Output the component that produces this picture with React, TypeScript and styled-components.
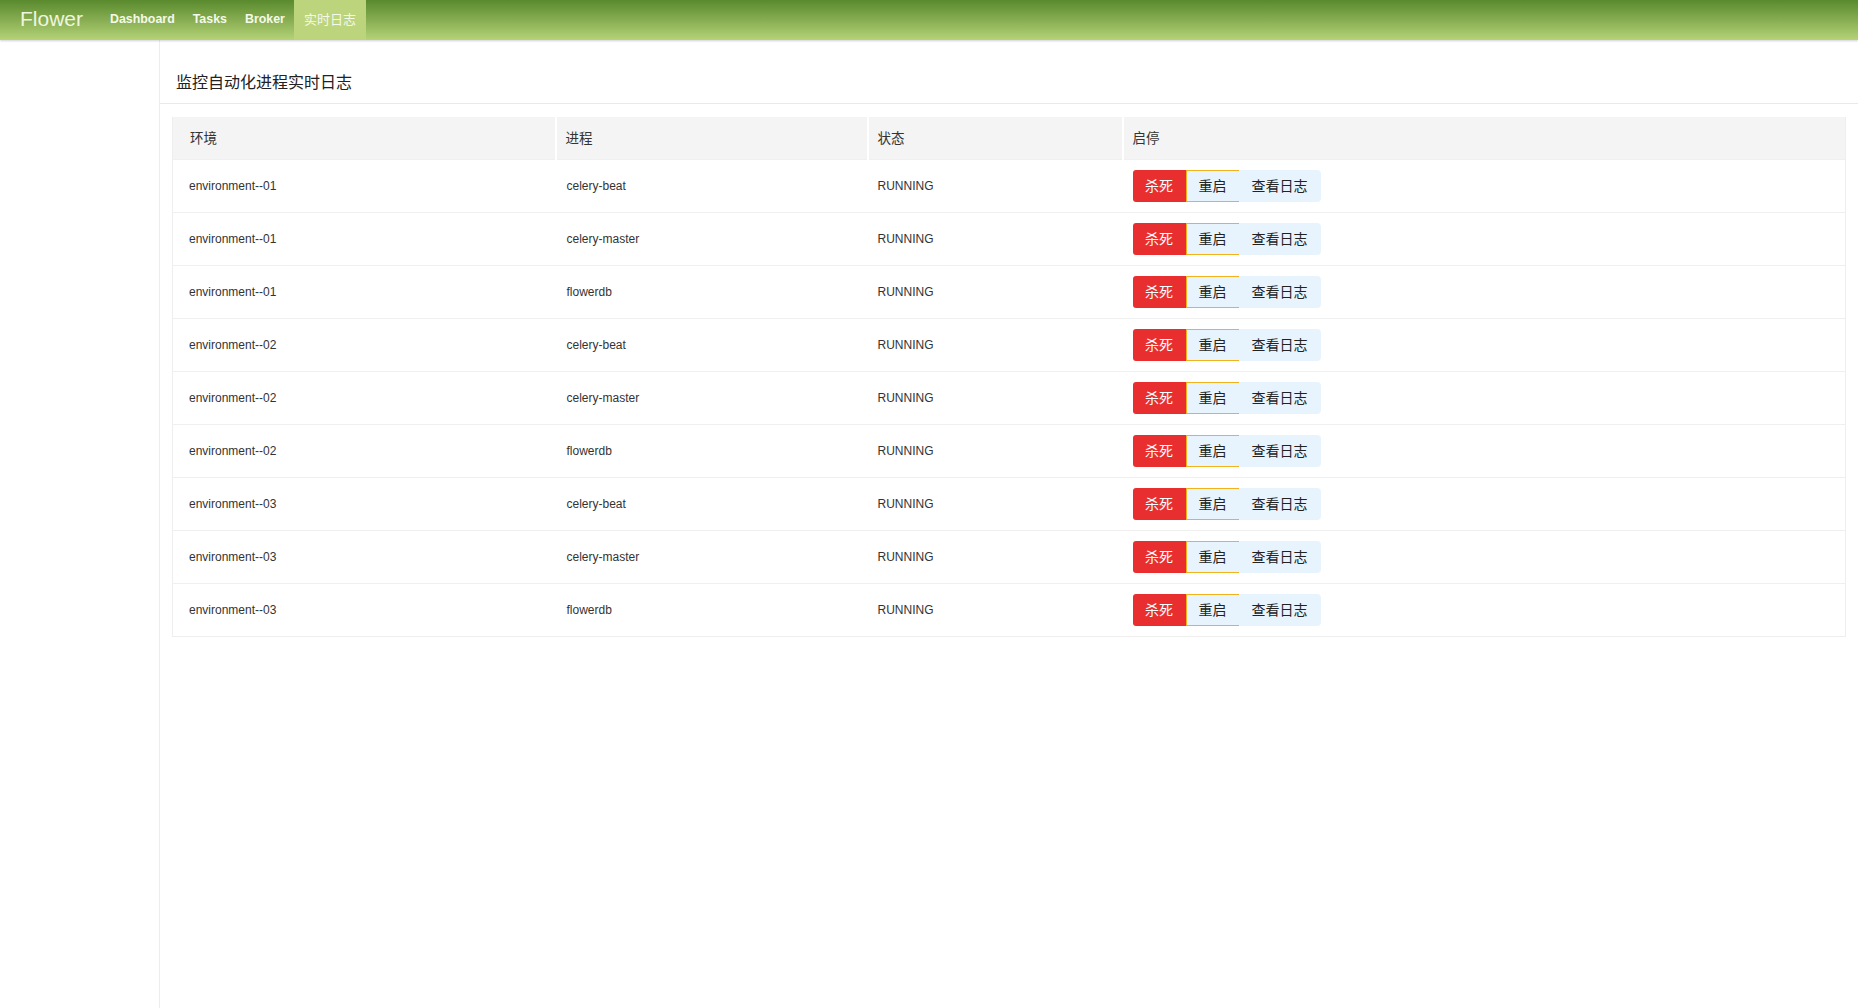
import React from "react";
import styled, { createGlobalStyle } from "styled-components";

const Global = createGlobalStyle`
  html, body { margin: 0; padding: 0; background: #fff; }
  body { font-family: "Liberation Sans", Arial, "Noto Sans CJK SC", sans-serif; color: #333; }
  #root { min-height: 100vh; }
`;

const Page = styled.div`
  display: flex;
  flex-direction: column;
  min-height: 100vh;
`;

const NavBar = styled.div`
  height: 40px;
  display: flex;
  align-items: stretch;
  background: linear-gradient(to bottom, #598a2d 0%, #87ad52 50%, #b5d377 100%);
  box-shadow: 0 1px 2px rgba(120, 120, 140, 0.35);
  position: relative;
  z-index: 1;
`;

const Brand = styled.div`
  font-size: 21px;
  color: #eef6df;
  padding: 0 20px;
  width: 61px;
  display: flex;
  align-items: center;
  padding-bottom: 3px;
`;

const NavItem = styled.div<{ $active?: boolean }>`
  display: flex;
  align-items: center;
  padding: 0 9px 2px 9px;
  font-size: 12.4px;
  font-weight: bold;
  color: #f4f9ea;
  background: ${(p) => (p.$active ? "#bcd47b" : "transparent")};
  font-family: ${(p) =>
    p.$active ? '"Noto Sans CJK SC", sans-serif' : '"Liberation Sans", Arial, sans-serif'};
  ${(p) => (p.$active ? "font-weight: normal; font-size: 13px; padding: 0 10px 3px 10px;" : "")}
`;

const Body = styled.div`
  flex: 1;
  display: flex;
`;

const Sidebar = styled.div`
  width: 159px;
  border-right: 1px solid #ececf4;
  flex-shrink: 0;
`;

const Main = styled.div`
  flex: 1;
  display: flex;
  flex-direction: column;
`;

const TitleBar = styled.div`
  padding: 30px 16px 11px 16px;
  font-size: 16px;
  line-height: 22px;
  color: #222;
  border-bottom: 1px solid #e8e8f3;
  font-family: "Noto Sans CJK SC", sans-serif;
`;

const TableWrap = styled.div`
  padding: 13px 12px 0 12px;
`;

const Table = styled.table`
  width: 100%;
  table-layout: fixed;
  border-collapse: collapse;
  border: 1px solid #eeeeee;
  border-top: none;
`;

const Col = styled.col<{ $w?: number }>`
  width: ${(p) => (p.$w ? `${p.$w}px` : "auto")};
`;

const Th = styled.th<{ $pl: number }>`
  background: #f4f4f4;
  height: 42px;
  box-sizing: border-box;
  padding: 0 0 2px ${(p) => p.$pl}px;
  text-align: left;
  font-weight: normal;
  font-size: 13.5px;
  color: #333;
  border-left: 2px solid #fff;
  font-family: "Noto Sans CJK SC", sans-serif;
  &:first-child { border-left: none; }
`;

const Tr = styled.tr`
  border-top: 1px solid #efefef;
`;

const Td = styled.td<{ $pl: number }>`
  height: 52px;
  padding: 0 0 0 ${(p) => p.$pl}px;
  font-size: 12px;
  color: #333;
`;

const BtnGroup = styled.div`
  display: inline-flex;
  height: 32px;
  vertical-align: middle;
`;

const Btn = styled.button<{ $kind: "kill" | "restart" | "log" }>`
  border: none;
  margin: 0;
  cursor: pointer;
  font-family: "Noto Sans CJK SC", sans-serif;
  font-size: 14px;
  height: 32px;
  box-sizing: border-box;
  padding: 0 0 2px 0;
  ${(p) =>
    p.$kind === "kill"
      ? "background: #e92e30; color: #fff; width: 53px; border-radius: 3px 0 0 3px;"
      : p.$kind === "restart"
      ? "background: #e8f4fd; color: #222; width: 53px; border-top: 1px solid #f2b21c; border-bottom: 1px solid #f2b21c; border-left: 1px solid #f2b21c;"
      : "background: #e8f4fd; color: #222; width: 82px; border-radius: 0 4px 4px 0;"}
`;

const rows: [string, string][] = [
  ["environment--01", "celery-beat"],
  ["environment--01", "celery-master"],
  ["environment--01", "flowerdb"],
  ["environment--02", "celery-beat"],
  ["environment--02", "celery-master"],
  ["environment--02", "flowerdb"],
  ["environment--03", "celery-beat"],
  ["environment--03", "celery-master"],
  ["environment--03", "flowerdb"],
];

export default function App() {
  return (
    <Page>
      <Global />
      <NavBar>
        <Brand>Flower</Brand>
        <NavItem>Dashboard</NavItem>
        <NavItem>Tasks</NavItem>
        <NavItem>Broker</NavItem>
        <NavItem $active>实时日志</NavItem>
      </NavBar>
      <Body>
        <Sidebar />
        <Main>
          <TitleBar>监控自动化进程实时日志</TitleBar>
          <TableWrap>
            <Table>
              <colgroup>
                <Col $w={383} />
                <Col $w={312} />
                <Col $w={255} />
                <Col />
              </colgroup>
              <thead>
                <tr>
                  <Th $pl={17}>环境</Th>
                  <Th $pl={9}>进程</Th>
                  <Th $pl={9}>状态</Th>
                  <Th $pl={9}>启停</Th>
                </tr>
              </thead>
              <tbody>
                {rows.map(([env, proc], i) => (
                  <Tr key={i}>
                    <Td $pl={16}>{env}</Td>
                    <Td $pl={11}>{proc}</Td>
                    <Td $pl={10}>RUNNING</Td>
                    <Td $pl={10}>
                      <BtnGroup>
                        <Btn $kind="kill">杀死</Btn>
                        <Btn $kind="restart">重启</Btn>
                        <Btn $kind="log">查看日志</Btn>
                      </BtnGroup>
                    </Td>
                  </Tr>
                ))}
              </tbody>
            </Table>
          </TableWrap>
        </Main>
      </Body>
    </Page>
  );
}
